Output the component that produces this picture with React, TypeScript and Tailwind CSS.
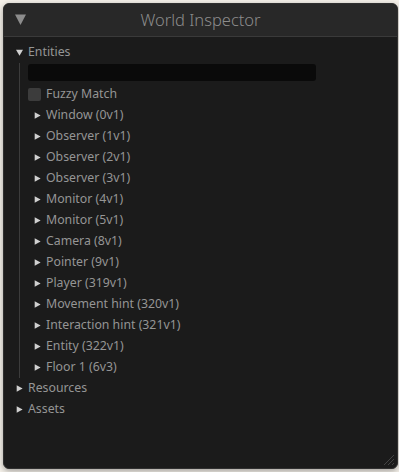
import React from "react";

const entities = [
  "Window (0v1)",
  "Observer (1v1)",
  "Observer (2v1)",
  "Observer (3v1)",
  "Monitor (4v1)",
  "Monitor (5v1)",
  "Camera (8v1)",
  "Pointer (9v1)",
  "Player (319v1)",
  "Movement hint (320v1)",
  "Interaction hint (321v1)",
  "Entity (322v1)",
  "Floor 1 (6v3)",
];

function Tri({ down = false, size = 7 }: { down?: boolean; size?: number }) {
  return (
    <svg width={size} height={size} viewBox="0 0 10 10" className="shrink-0">
      {down ? (
        <polygon points="0,1 10,1 5,9.5" fill="#d0d0d0" />
      ) : (
        <polygon points="1,0.5 9.5,5 1,9.5" fill="#d0d0d0" />
      )}
    </svg>
  );
}

export default function App() {
  return (
    <div
      className="w-[399px] h-[472px] bg-[#f5f1ea] pt-[3px] pl-[3px] overflow-hidden"
      style={{ fontFamily: '"Noto Sans", "Open Sans", sans-serif' }}
    >
      <div className="relative w-[395px] h-[466px] rounded-[6px] bg-[#1b1b1b] border border-[#303030] shadow-[0_2px_6px_rgba(0,0,0,0.35)] flex flex-col overflow-hidden">
        <div className="h-[33px] shrink-0 bg-[#282828] border-b border-[#3a3a3a] flex items-center relative">
          <div className="absolute left-[11px] top-[10px]">
            <svg width="11" height="11" viewBox="0 0 10 10">
              <polygon points="0,0.5 10,0.5 5,10" fill="#8c8c8c" />
            </svg>
          </div>
          <div className="w-full text-center text-[16.5px] text-[#8c8c8c] leading-none pt-[1px] font-light">
            World Inspector
          </div>
        </div>
        <div className="flex flex-col pt-[5px] text-[12.3px] text-[#959595] leading-none">
          <div className="h-[21px] flex items-center pl-[12px] gap-[5px]">
            <Tri down size={7} />
            <span>Entities</span>
          </div>
          <div className="flex ml-[15px] border-l border-[#3c3c3c]">
            <div className="flex flex-col pl-[8px]">
              <div className="mt-[1px] w-[288px] h-[17px] rounded-[3px] bg-[#0a0a0a]" />
              <div className="h-[21px] mt-[3px] flex items-center gap-[5px]">
                <div className="w-[13px] h-[13px] rounded-[2px] bg-[#3c3c3c]" />
                <span>Fuzzy Match</span>
              </div>
              {entities.map((e) => (
                <div key={e} className="h-[21px] flex items-center pl-[6px] gap-[5px]">
                  <Tri size={7} />
                  <span>{e}</span>
                </div>
              ))}
            </div>
          </div>
          <div className="h-[21px] flex items-center pl-[12px] gap-[5px]">
            <Tri size={7} />
            <span>Resources</span>
          </div>
          <div className="h-[21px] flex items-center pl-[12px] gap-[5px]">
            <Tri size={7} />
            <span>Assets</span>
          </div>
        </div>
        <svg className="absolute right-[2px] bottom-[2px]" width="12" height="12" viewBox="0 0 12 12">
          <line x1="11" y1="1" x2="1" y2="11" stroke="#444" strokeWidth="1" />
          <line x1="11" y1="5" x2="5" y2="11" stroke="#444" strokeWidth="1" />
          <line x1="11" y1="9" x2="9" y2="11" stroke="#444" strokeWidth="1" />
        </svg>
      </div>
    </div>
  );
}
